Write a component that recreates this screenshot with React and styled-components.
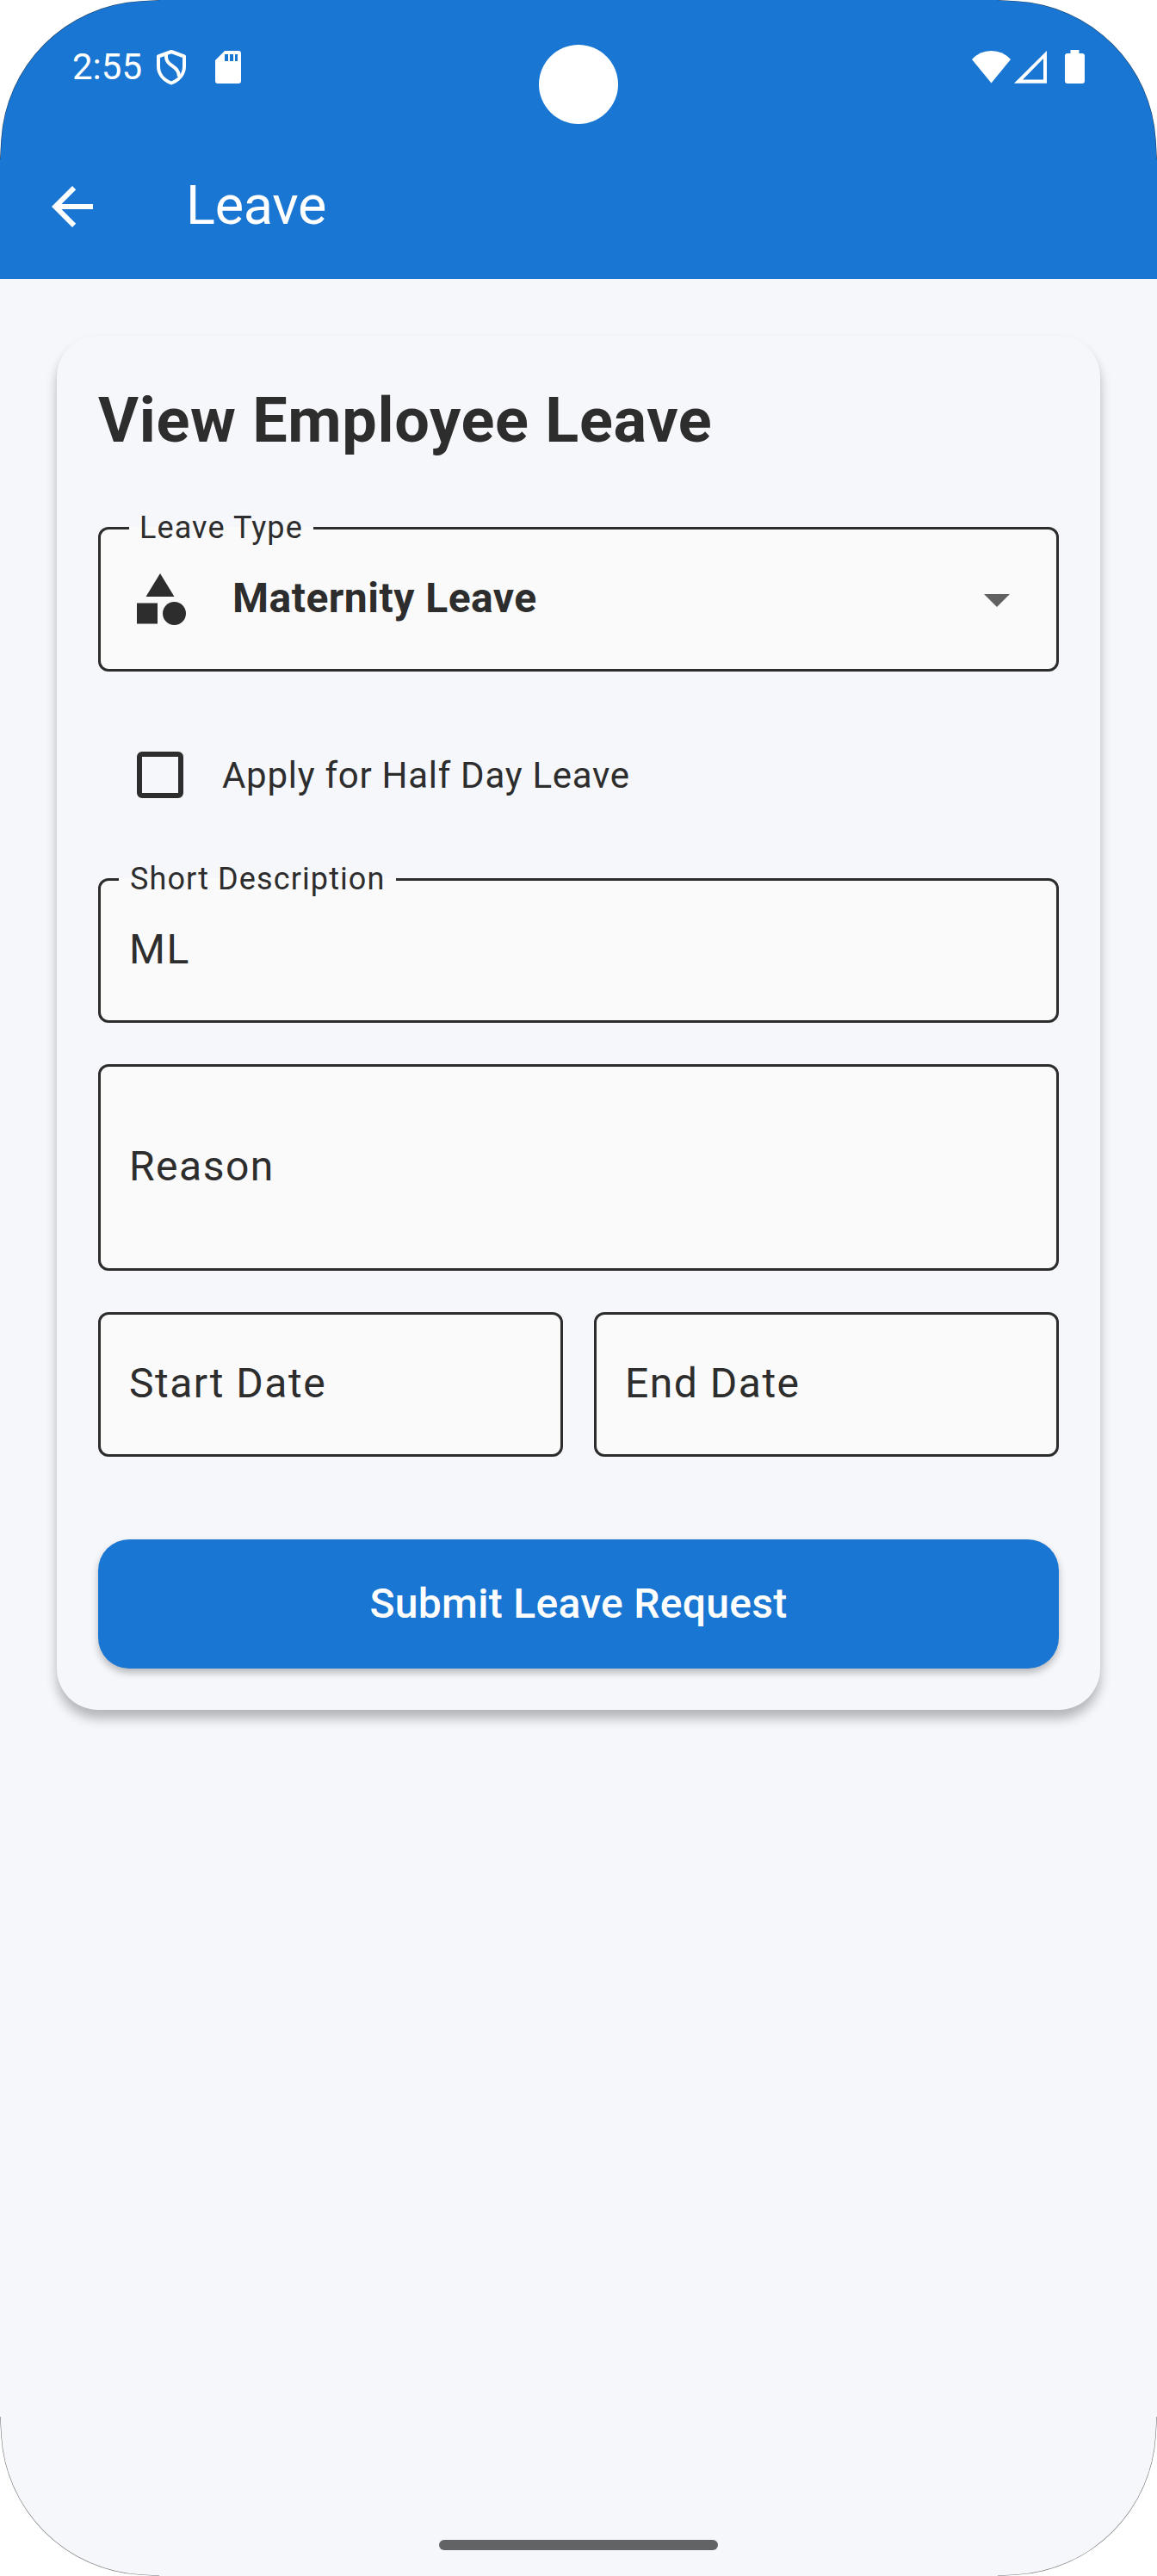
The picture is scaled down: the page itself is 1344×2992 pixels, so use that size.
import React from 'react';
import styled, { createGlobalStyle } from 'styled-components';

const ink = '#2d2d2d';
const blue = '#1976d2';
const surface = '#f5f7fb';

const GlobalStyle = createGlobalStyle`
  * { box-sizing: border-box; }
  html, body { margin: 0; padding: 0; background: #ffffff; }
  body { font-family: Roboto, "Noto Sans", sans-serif; color: ${ink}; }
`;

const Screen = styled.div`
  position: relative;
  width: 1344px;
  height: 2992px;
  overflow: hidden;
  display: flex;
  flex-direction: column;
  background: ${surface};
`;

const Header = styled.header`
  height: 324px;
  flex: none;
  background: ${blue};
  color: #ffffff;
  display: flex;
  flex-direction: column;
`;

const StatusBar = styled.div`
  height: 156px;
  padding: 0 84px;
  display: flex;
  align-items: center;
  justify-content: space-between;
`;

const StatusGroup = styled.div`
  display: flex;
  align-items: center;
`;

const Clock = styled.span`
  font-size: 42px;
  line-height: 50px;
  width: 97px;
`;

const StatusIcon = styled.svg`
  display: block;
  flex: none;
  width: ${(p) => p.$w}px;
  height: 42px;
  margin-left: ${(p) => p.$ml || 0}px;
`;

const Camera = styled.div`
  position: absolute;
  left: 626px;
  top: 52px;
  width: 92px;
  height: 92px;
  border-radius: 50%;
  background: #ffffff;
`;

const AppBar = styled.div`
  height: 168px;
  padding-left: 48px;
  display: flex;
  align-items: center;
  gap: 96px;
`;

const Icon = styled.svg`
  display: block;
  flex: none;
  width: 72px;
  height: 72px;
  fill: ${(p) => p.$color || 'currentColor'};
`;

const BackButton = styled.button`
  border: 0;
  padding: 0;
  background: none;
  color: inherit;
`;

const AppTitle = styled.h1`
  margin: 0 0 2px;
  font-size: 63px;
  line-height: 74px;
  font-weight: 400;
  letter-spacing: -0.3px;
`;

const Content = styled.main`
  flex: 1;
  padding: 66px;
`;

const Card = styled.form`
  display: flex;
  flex-direction: column;
  padding: 48px;
  border-radius: 48px;
  background: ${surface};
  box-shadow: 0 10px 13px rgba(0, 0, 0, 0.27);
`;

const CardTitle = styled.h2`
  margin: 0 0 72px;
  font-size: 72px;
  line-height: 102px;
  font-weight: 700;
  letter-spacing: 0.68px;
`;

const Field = styled.div`
  position: relative;
  flex: 1 1 0;
  min-width: 0;
  display: flex;
  align-items: center;
  height: ${(p) => p.$height || 168}px;
  min-height: ${(p) => p.$height || 168}px;
  padding: 0 33px 3px;
  border: 3px solid ${ink};
  border-radius: 12px;
  background: #fafafa;
`;

const FloatingLabel = styled.label`
  position: absolute;
  top: -23px;
  left: ${(p) => p.$left}px;
  padding: 0 ${(p) => p.$pad || 13}px;
  font-size: 36px;
  line-height: 42px;
  letter-spacing: 1.1px;
  white-space: nowrap;
  background: linear-gradient(${surface} 20px, #fafafa 20px);
`;

const Value = styled.span`
  flex: 1;
  font-size: 48px;
  line-height: 60px;
  letter-spacing: 1.5px;
`;

const SelectValue = styled(Value)`
  margin-left: 48px;
  padding-bottom: 3px;
  font-weight: 700;
  letter-spacing: 0.48px;
`;

const SelectRow = styled.div`
  flex: 1;
  display: flex;
  align-items: center;
  padding-top: 3px;
`;

const CheckRow = styled.div`
  height: 144px;
  margin: 48px 0;
  padding-left: 45px;
  display: flex;
  align-items: center;
  gap: 45px;
`;

const Checkbox = styled.span`
  width: 54px;
  height: 54px;
  border: 6px solid ${ink};
  border-radius: 6px;
`;

const CheckLabel = styled.span`
  padding-top: 2px;
  font-size: 42px;
  line-height: 50px;
  letter-spacing: 0.72px;
`;

const FieldStack = styled.div`
  display: flex;
  flex-direction: column;
  gap: 48px;
`;

const DateRow = styled.div`
  display: flex;
  gap: 36px;
`;

const SubmitButton = styled.button`
  height: 150px;
  margin-top: 96px;
  padding: 0;
  border: 0;
  border-radius: 36px;
  background: ${blue};
  color: #ffffff;
  font: 500 48px/60px Roboto, "Noto Sans", sans-serif;
  letter-spacing: 0.3px;
  box-shadow: 0 5px 8px rgba(0, 0, 0, 0.25);
`;

const HomeIndicator = styled.div`
  align-self: center;
  flex: none;
  width: 324px;
  height: 12px;
  margin-bottom: 30px;
  border-radius: 6px;
  background: #626365;
`;

const CornerSvg = styled.svg`
  position: absolute;
  width: 230px;
  height: 230px;
  ${(p) => (p.$right ? 'right: 0;' : 'left: 0;')}
  ${(p) => (p.$bottom ? 'bottom: 0;' : 'top: 0;')}
  transform: scale(${(p) => (p.$right ? -1 : 1)}, ${(p) => (p.$bottom ? -1 : 1)});
`;

function Corner({ right, bottom }) {
  return (
    <CornerSvg $right={right} $bottom={bottom} viewBox="0 0 230 230">
      <path
        d="M0 185L1.2 163A172 172 0 0 1 163 1.2L185 0"
        fill="none"
        stroke="#222"
        strokeOpacity=".6"
        strokeWidth="1.2"
      />
      <path d="M0 0V185L1.2 163A172 172 0 0 1 163 1.2L185 0Z" fill="#fff" />
    </CornerSvg>
  );
}

export default function App() {
  return (
    <>
      <GlobalStyle />
      <Screen>
        <Header>
          <StatusBar>
            <StatusGroup>
              <Clock>2:55</Clock>
              <StatusIcon $w={36} viewBox="0 0 36 42" fill="none" stroke="#fff" strokeWidth="4">
                <path d="M18 3L33 8.500V20C33 29 27 36 18 39.500C9 36 3 29 3 20V8.500Z" strokeLinejoin="round" />
                <path d="M12 5V9C12 20 27 19 27 32" />
              </StatusIcon>
              <StatusIcon $w={30} $ml={33} viewBox="0 0 30 42">
                <path
                  d="M11 2H27Q30 2 30 5V37Q30 40 27 40H3Q0 40 0 37V13ZM11 6V14H15V6ZM17 6V14H21V6ZM23 6V14H26V6Z"
                  fill="#fff"
                  fillRule="evenodd"
                />
              </StatusIcon>
            </StatusGroup>
            <StatusGroup>
              <StatusIcon $w={45} viewBox="0 0 45 42">
                <path d="M22.500 39.500L0 12Q9 2 22.500 2T45 12Z" fill="#fff" />
              </StatusIcon>
              <StatusIcon $w={38} $ml={4} viewBox="0 0 38 42">
                <path d="M38 2V39.700H0ZM34 11V35.500H10Z" fill="#fff" fillRule="evenodd" />
              </StatusIcon>
              <StatusIcon $w={23} $ml={21} viewBox="0 0 23 42">
                <path d="M6.500 1H16.500V5H20Q23 5 23 8V37Q23 40 20 40H3Q0 40 0 37V8Q0 5 3 5H6.500Z" fill="#fff" />
              </StatusIcon>
            </StatusGroup>
          </StatusBar>
          <AppBar>
            <BackButton type="button" aria-label="Back">
              <Icon viewBox="0 0 24 24">
                <path d="M20 11H7.830l5.590-5.590L12 4l-8 8 8 8 1.410-1.410L7.830 13H20v-2z" />
              </Icon>
            </BackButton>
            <AppTitle>Leave</AppTitle>
          </AppBar>
        </Header>
        <Content>
          <Card>
            <CardTitle>View Employee Leave</CardTitle>
            <Field>
              <FloatingLabel $left={33} $pad={12}>Leave Type</FloatingLabel>
              <SelectRow>
                <Icon viewBox="0 0 24 24">
                  <path d="M12 2l-5.500 9h11z" />
                  <circle cx="17.500" cy="17.500" r="4.500" />
                  <path d="M3 13.500h8v8H3z" />
                </Icon>
                <SelectValue>Maternity Leave</SelectValue>
                <Icon viewBox="0 0 24 24" $color="#616161">
                  <path d="M7 10l5 5 5-5z" />
                </Icon>
              </SelectRow>
            </Field>
            <CheckRow>
              <Checkbox />
              <CheckLabel>Apply for Half Day Leave</CheckLabel>
            </CheckRow>
            <FieldStack>
              <Field>
                <FloatingLabel $left={21}>Short Description</FloatingLabel>
                <Value>ML</Value>
              </Field>
              <Field $height={240}>
                <Value>Reason</Value>
              </Field>
              <DateRow>
                <Field>
                  <Value>Start Date</Value>
                </Field>
                <Field>
                  <Value>End Date</Value>
                </Field>
              </DateRow>
            </FieldStack>
            <SubmitButton type="button">Submit Leave Request</SubmitButton>
          </Card>
        </Content>
        <HomeIndicator />
        <Camera />
        <Corner />
        <Corner right />
        <Corner bottom />
        <Corner right bottom />
      </Screen>
    </>
  );
}
